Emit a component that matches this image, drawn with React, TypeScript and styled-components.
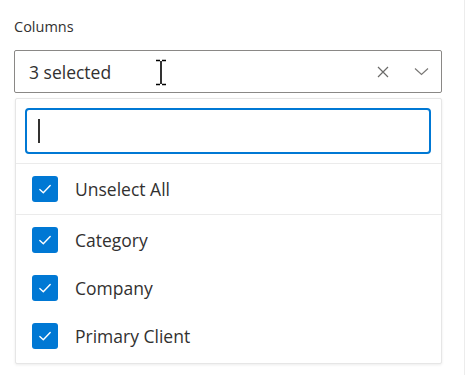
import React from "react";
import styled, { createGlobalStyle } from "styled-components";

const GlobalStyle = createGlobalStyle`
  html, body {
    margin: 0;
    padding: 0;
    background: #fff;
  }
  body {
    font-family: "Open Sans", "Noto Sans", "Liberation Sans", sans-serif;
    color: #323130;
  }
`;

const Page = styled.div`
  position: relative;
  box-sizing: border-box;
  width: 465px;
  height: 375px;
  padding: 17px 0 0 14px;
  border-right: 1px solid #ececec;
`;

const Field = styled.div`
  width: 428px;
`;

const Label = styled.div`
  font-size: 14.5px;
  line-height: 20px;
  margin-bottom: 13px;
  color: #323130;
`;

const Combo = styled.div`
  box-sizing: border-box;
  height: 43px;
  display: flex;
  align-items: center;
  padding: 0 4px 0 14px;
  border: 1px solid #8a8886;
  border-radius: 2px;
`;

const ComboText = styled.span`
  flex: 1;
  font-size: 17.5px;
  color: #323130;
`;

const IconButton = styled.span<{ $gap?: number }>`
  display: flex;
  align-items: center;
  justify-content: center;
  width: 32px;
  height: 32px;
  margin-left: ${({ $gap }) => $gap ?? 0}px;
`;

const Panel = styled.div`
  box-sizing: border-box;
  margin: 5px 0 0 1px;
  width: 427px;
  border: 1px solid #e6e6e6;
  border-radius: 2px;
  box-shadow: 0 1px 3px rgba(0, 0, 0, 0.08);
  background: #fff;
`;

const SearchWrap = styled.div`
  padding: 9px 10px 9px 9px;
  border-bottom: 1px solid #ebebeb;
`;

const SearchBox = styled.div`
  box-sizing: border-box;
  height: 46px;
  border: 2px solid #0078d4;
  border-radius: 4px;
  display: flex;
  align-items: center;
  padding-left: 11px;
`;

const Caret = styled.span`
  width: 2px;
  height: 24px;
  background: #323130;
`;

const OptionList = styled.div<{ $top?: boolean }>`
  padding: ${({ $top }) => ($top ? "0" : "1px 0 3px")};
  border-bottom: ${({ $top }) => ($top ? "1px solid #ebebeb" : "none")};
`;

const Option = styled.div<{ $tall?: boolean }>`
  display: flex;
  align-items: center;
  gap: 17px;
  height: ${({ $tall }) => ($tall ? "50px" : "48px")};
  padding-left: 16px;
  font-size: 17.5px;
  color: #323130;
`;

const Box = styled.span`
  display: flex;
  align-items: center;
  justify-content: center;
  width: 26px;
  height: 26px;
  border-radius: 3px;
  background: #0078d4;
`;

const Cursor = styled.svg`
  position: absolute;
  left: 154px;
  top: 59px;
`;

const Check = () => (
  <Box>
    <svg width="16" height="16" viewBox="0 0 16 16" fill="none">
      <path d="M2.8 8.6 L6.3 11.8 L13.2 4.6" stroke="#fff" strokeWidth="1.4" strokeLinecap="round" strokeLinejoin="round" />
    </svg>
  </Box>
);

const items = ["Category", "Company", "Primary Client"];

export default function App() {
  return (
    <>
      <GlobalStyle />
      <Page>
        <Field>
          <Label>Columns</Label>
          <Combo>
            <ComboText>3 selected</ComboText>
            <IconButton>
              <svg width="12" height="12" viewBox="0 0 12 12">
                <path d="M1 1 L11 11 M11 1 L1 11" stroke="#6b6a69" strokeWidth="1.2" />
              </svg>
            </IconButton>
            <IconButton $gap={6}>
              <svg width="15" height="9" viewBox="0 0 15 9">
                <path d="M1 1.5 L7.5 7.5 L14 1.5" stroke="#7a7876" strokeWidth="1.2" fill="none" />
              </svg>
            </IconButton>
          </Combo>
          <Panel>
            <SearchWrap>
              <SearchBox>
                <Caret />
              </SearchBox>
            </SearchWrap>
            <OptionList $top>
              <Option $tall>
                <Check />
                Unselect All
              </Option>
            </OptionList>
            <OptionList>
              {items.map((it) => (
                <Option key={it}>
                  <Check />
                  {it}
                </Option>
              ))}
            </OptionList>
          </Panel>
        </Field>
        <Cursor width="14" height="27" viewBox="0 0 14 27">
          <path d="M2 1.5 H6 M8 1.5 H12 M7 2 V25 M2 25.5 H6 M8 25.5 H12" stroke="#000" strokeWidth="1.6" fill="none" />
        </Cursor>
      </Page>
    </>
  );
}
